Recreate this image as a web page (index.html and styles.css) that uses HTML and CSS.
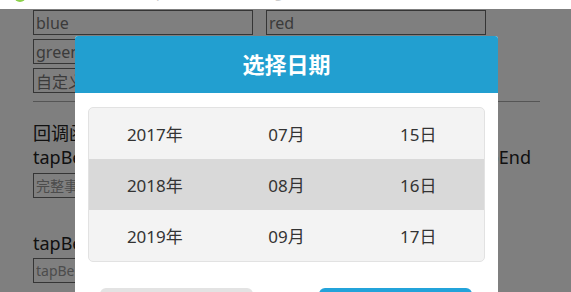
FILE: index.html
```html
<!DOCTYPE html>
<html lang="zh-CN">
<head>
  <meta charset="UTF-8" />
  <meta name="viewport" content="width=device-width, initial-scale=1.0" />
  <title>日期选择</title>
  <link rel="stylesheet" href="styles.css">
</head>
<body>
  <header class="topbar">
    <div class="topbar-row">
      <span class="logo"></span>
      <span class="topbar-title">picker · 日期选择 · getPicker()</span>
    </div>
  </header>

  <main class="page">
    <div class="field-row">
      <input class="field" value="blue" />
      <input class="field" value="red" />
    </div>
    <input class="field" value="green" />
    <input class="field" value="自定义颜色" />

    <hr class="divider" />

    <p class="label">回调函数</p>
    <div class="event-row">
      <span>tapBegin</span>
      <span>tapEnd</span>
    </div>
    <input class="field small" placeholder="完整事件输出" />

    <p class="label spaced">tapBegin</p>
    <input class="field small" placeholder="tapBegin 输出" />
  </main>

  <div class="mask">
    <div class="dialog">
      <div class="dialog-head">选择日期</div>
      <div class="dialog-body">
        <div class="picker">
          <div class="picker-row">
            <span>2017年</span><span>07月</span><span>15日</span>
          </div>
          <div class="picker-row active">
            <span>2018年</span><span>08月</span><span>16日</span>
          </div>
          <div class="picker-row">
            <span>2019年</span><span>09月</span><span>17日</span>
          </div>
        </div>
        <div class="dialog-btns">
          <button class="btn cancel">取消</button>
          <button class="btn ok">确定</button>
        </div>
      </div>
    </div>
  </div>
</body>
</html>
```

FILE: styles.css
```css
body {
  margin: 0;
  font-family: "Noto Sans", "Noto Sans CJK SC", sans-serif;
  background-color: #fff;
  color: #222;
  overflow: hidden;
}
.topbar {
  height: 9px;
  overflow: hidden;
  background-color: #fff;
}
.topbar-row {
  display: flex;
  align-items: flex-end;
  margin-top: -15px;
  padding-left: 14px;
  height: 14px;
}
.logo {
  flex: none;
  width: 12px;
  height: 12px;
  border-radius: 50%;
  background-color: #8cd14a;
  margin-bottom: -3px;
}
.topbar-title {
  margin-left: 130px;
  font-size: 14px;
  line-height: 14px;
  color: #ccc;
}
.page {
  padding: 1px 31px 0 33px;
}
.field-row {
  display: flex;
  gap: 13px;
}
.field {
  display: block;
  box-sizing: border-box;
  width: 220px;
  height: 25px;
  margin: 0 0 4px 0;
  padding: 0 2px;
  border: 1px solid #6a6a6a;
  font-family: inherit;
  font-size: 16px;
  color: #777;
  background: #fff;
}
.field.small {
  height: 25px;
  font-size: 14px;
}
.field.small::placeholder {
  color: #999;
}
.divider {
  margin: 8px 0 0 0;
  border: 0;
  border-top: 1px solid #aaa;
}
.label {
  margin: 19px 0 0 0;
  font-size: 18px;
  line-height: 24px;
}
.label.spaced {
  margin: 33px 0 3px 0;
}
.event-row {
  display: flex;
  justify-content: space-between;
  width: 498px;
  font-size: 18px;
  line-height: 24px;
  margin-bottom: 4px;
}
.mask {
  position: fixed;
  top: 9px;
  left: 0;
  right: 0;
  bottom: 0;
  display: flex;
  justify-content: center;
  align-items: flex-start;
  padding: 27px 0 0 2px;
  background-color: rgba(0, 0, 0, 0.5);
}
.dialog {
  width: 423px;
  background-color: #fff;
  border-radius: 3px;
  overflow: hidden;
}
.dialog-head {
  height: 57px;
  line-height: 57px;
  text-align: center;
  background-color: #229fd0;
  color: #fff;
  font-size: 22px;
  font-weight: bold;
}
.dialog-body {
  padding: 14px 13px 20px 13px;
}
.picker {
  border: 1px solid #e2e2e2;
  border-radius: 5px;
  background-color: #f3f3f3;
  overflow: hidden;
}
.picker-row {
  display: grid;
  grid-template-columns: 1fr 1fr 1fr;
  height: 51px;
  align-items: center;
  text-align: center;
  font-size: 17px;
  color: #333;
}
.picker-row.active {
  background-color: #d9d9d9;
}
.dialog-btns {
  display: flex;
  justify-content: space-between;
  margin-top: 26px;
  padding: 0 13px 0 12px;
}
.btn {
  width: 153px;
  height: 48px;
  border: 0;
  border-radius: 6px;
  font-family: inherit;
  font-size: 17px;
}
.btn.cancel {
  background-color: #e3e3e3;
  color: #333;
}
.btn.ok {
  background-color: #23a3da;
  color: #fff;
}
```
